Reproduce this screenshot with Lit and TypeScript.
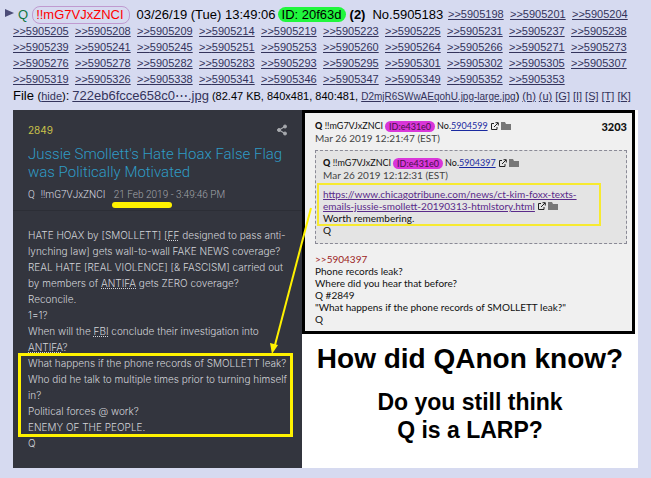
import { LitElement, html, css, svg } from "lit";
import { customElement, property } from "lit/decorators.js";

const BACKLINKS = [
  5905198, 5905201, 5905204,
  5905205, 5905208, 5905209, 5905214, 5905219, 5905223, 5905225, 5905231, 5905237, 5905238,
  5905239, 5905241, 5905245, 5905251, 5905253, 5905260, 5905264, 5905266, 5905271, 5905273,
  5905276, 5905278, 5905282, 5905283, 5905293, 5905295, 5905301, 5905302, 5905305, 5905307,
  5905319, 5905326, 5905338, 5905341, 5905346, 5905347, 5905349, 5905352, 5905353,
];

@customElement("post-header")
class PostHeader extends LitElement {
  static styles = css`
    :host {
      display: block;
      color: #000;
      font: 13px/16px "Liberation Sans", Arial, sans-serif;
    }
    a { color: #34345c; }
    .row { display: flex; }
    .toggle {
      flex: none;
      width: 9px;
      height: 16px;
      margin: 5px -1px 0 0;
      padding: 0;
      border: 0;
      background: none;
      display: flex;
      align-items: center;
    }
    .intro { display: flex; flex-wrap: wrap; min-width: 0; padding-top: 6px; }
    .who {
      flex: 0 0 435px;
      min-width: 0;
      height: 17px;
      display: flex;
      align-items: center;
      white-space: nowrap;
    }
    .name { color: #117743; padding-left: 5px; }
    .trip {
      color: #f00;
      margin-left: 4px;
      padding: 0 5px 0 3px;
      border: 1px solid #c09ad0;
      border-radius: 8px;
    }
    .time { margin-left: 7px; }
    .id {
      margin-left: 2px;
      padding: 0 4px;
      line-height: 15px;
      border-radius: 8px;
      background: #20f63d;
    }
    .count { margin-left: 4px; font-weight: bold; }
    .no { margin-left: 7px; }
    .back { flex: none; width: 62px; font-size: 11px; line-height: 16px; }
    .file {
      display: flex;
      flex-wrap: wrap;
      align-items: baseline;
      padding-left: 8px;
      gap: 0 3px;
      line-height: 18px;
      white-space: nowrap;
    }
    .small { font-size: 11px; }
    .orig { font-size: 10px; }
  `;

  render() {
    return html`
      <div class="row">
        <button class="toggle" aria-label="Collapse post">
          <svg width="9" height="10" viewBox="0 0 9 10"><path d="M0 1L9 5L0 9Z" fill="#4c4c78" /></svg>
        </button>
        <div class="intro">
          <div class="who">
            <span class="name">Q</span><span class="trip">!!mG7VJxZNCI</span>
            <time class="time">03/26/19 (Tue) 13:49:06</time>
            <span class="id">ID: 20f63d</span><span class="count">(2)</span>
            <span class="no">No.5905183</span>
          </div>
          ${BACKLINKS.map((n) => html`<span class="back"><a href="#${n}">&gt;&gt;${n}</a></span>`)}
        </div>
      </div>
      <div class="file">
        <span>File <span class="small">(<a href="#hide">hide</a>)</span>:</span>
        <a href="#file">722eb6fcce658c0⋯.jpg</a>
        <span class="small">(82.47 KB, 840x481, 840:481, <a class="orig" href="#orig">D2mjR6SWwAEqohU.jpg-large.jpg</a>)</span>
        ${["(h)", "(u)", "[G]", "[I]", "[S]", "[T]", "[K]"].map((t) => html`<a class="small" href="#${t}">${t}</a>`)}
      </div>
    `;
  }
}

@customElement("drop-card")
class DropCard extends LitElement {
  static styles = css`
    :host {
      display: block;
      background: #33353e;
      color: #d2d4d9;
      font: 300 10px/16px Inter, sans-serif;
      white-space: nowrap;
    }
    .head { padding: 12px 15px 7px; border-bottom: 1px solid #2c2e36; }
    .top { display: flex; justify-content: space-between; align-items: center; height: 16px; }
    .num { color: #c9c04a; font-weight: 400; }
    .share { padding: 0; border: 0; background: none; height: 12px; display: flex; }
    h2 {
      margin: 7px 0 6px;
      color: #2f9cc6;
      font: 300 15px/18px Roboto, sans-serif;
    }
    .by { color: #a3a5ab; font: 300 10px/16px Roboto, sans-serif; }
    .trip { color: #dcdee2; margin-right: 6px; }
    .date { position: relative; }
    .date::after {
      content: "";
      position: absolute;
      left: -2px;
      right: -4px;
      top: 13px;
      height: 6px;
      border-radius: 3px;
      background: #fff200;
    }
    .body { padding: 16px 15px 17px; }
    .body p { margin: 0; }
    abbr { text-decoration: underline dotted; }
    .key { position: relative; }
    .key::before {
      content: "";
      position: absolute;
      inset: -2px -6px -2px -10px;
      border: 3px solid #fff200;
    }
  `;

  render() {
    return html`
      <div class="head">
        <div class="top">
          <span class="num">2849</span>
          <button class="share" aria-label="Share">
            <svg width="10" height="12" viewBox="0 0 10 12" fill="#a7a9ae" stroke="#a7a9ae">
              <path d="M8 2.5L2 6L8 9.5" fill="none" stroke-width="1.2" />
              <circle cx="8" cy="2.5" r="1.5" /><circle cx="2" cy="6" r="1.5" /><circle cx="8" cy="9.5" r="1.5" />
            </svg>
          </button>
        </div>
        <h2>Jussie Smollett's Hate Hoax False Flag<br />was Politically Motivated</h2>
        <div class="by">
          <span class="trip">Q</span><span class="trip">!!mG7VJxZNCI</span>
          <span class="date">21 Feb 2019</span> - 3:49:46 PM
        </div>
      </div>
      <div class="body">
        <p>HATE HOAX by [SMOLLETT] [<abbr>FF</abbr> designed to pass anti-<br />lynching law] gets wall-to-wall FAKE NEWS coverage?</p>
        <p>REAL HATE [REAL VIOLENCE] [&amp; FASCISM] carried out<br />by members of <abbr>ANTIFA</abbr> gets ZERO coverage?</p>
        <p>Reconcile.</p>
        <p>1=1?</p>
        <p>When will the <abbr>FBI</abbr> conclude their investigation into<br /><abbr>ANTIFA</abbr>?</p>
        <div class="key">
          <p>What happens if the phone records of SMOLLETT leak?</p>
          <p>Who did he talk to multiple times prior to turning himself<br />in?</p>
          <p>Political forces @ work?</p>
          <p>ENEMY OF THE PEOPLE.</p>
        </div>
        <p>Q</p>
      </div>
    `;
  }
}

const openIcon = svg`<svg class="icon" width="9" height="9" viewBox="0 0 9 9" fill="none" stroke="#222">
  <path d="M4 1.5H1.5V7.5H7V5M5.5 .7H8.3V3.5M8 1L4 5" /></svg>`;
const folderIcon = svg`<svg class="icon" width="11" height="9" viewBox="0 0 11 9">
  <path d="M0 0H4L5 2H10V8H0Z" fill="#777" /></svg>`;

@customElement("post-meta")
class PostMeta extends LitElement {
  @property() no = "";
  @property() date = "";

  static styles = css`
    :host { display: block; }
    .line { display: flex; align-items: center; height: 12px; white-space: nowrap; font-size: 9px; }
    .id {
      margin: 0 2px;
      padding: 0 4px;
      line-height: 11px;
      border-radius: 6px;
      background: #d936d9;
      color: #4a104a;
    }
    b { font-weight: 900; }
    a { color: #1a2aa0; }
    .icon { margin-left: 2px; }
    .date { display: block; color: #444; }
  `;

  render() {
    return html`
      <div class="line">
        <b>Q</b>&nbsp;<span>!!mG7VJxZNCI</span><span class="id">ID:e431e0</span>
        <span>No.<a href="#${this.no}">${this.no}</a></span>${openIcon}${folderIcon}
      </div>
      <time class="date">${this.date}</time>
    `;
  }
}

@customElement("reply-card")
class ReplyCard extends LitElement {
  static styles = css`
    :host {
      display: block;
      position: relative;
      margin-right: 3px;
      padding: 7px 5px 6px 10px;
      border: 3px solid #000;
      background: #f0f0f0;
      color: #111;
      font: 10px/12px Lato, sans-serif;
    }
    .num { position: absolute; top: 8px; right: 5px; font-size: 11px; font-weight: 900; }
    .quote {
      margin: 6px 0 9px;
      padding: 6px 7px 7px;
      border: 1px dashed #8a8a96;
      background: #e4e4e4;
    }
    p { margin: 0; }
    .key { position: relative; margin-top: 7px; }
    .key::before {
      content: "";
      position: absolute;
      inset: -5px 18px -2px -6px;
      border: 2px solid #f7ea30;
    }
    .url { color: #5a2a8a; position: relative; }
    .ref { display: block; color: #9c1c1c; text-decoration: none; }
    .icon { margin-left: 2px; vertical-align: -1px; }
  `;

  render() {
    return html`
      <span class="num">3203</span>
      <post-meta no="5904599" date="Mar 26 2019 12:21:47 (EST)"></post-meta>
      <div class="quote">
        <post-meta no="5904397" date="Mar 26 2019 12:12:31 (EST)"></post-meta>
        <div class="key">
          <a class="url" href="#article">https://www.chicagotribune.com/news/ct-kim-foxx-texts-<br />emails-jussie-smollett-20190313-htmlstory.html</a>${openIcon}${folderIcon}
          <p>Worth remembering.</p>
        </div>
        <p>Q</p>
      </div>
      <a class="ref" href="#5904397">&gt;&gt;5904397</a>
      <p>Phone records leak?</p>
      <p>Where did you hear that before?</p>
      <p>Q #2849</p>
      <p>"What happens if the phone records of SMOLLETT leak?"</p>
      <p>Q</p>
    `;
  }
}

@customElement("app-root")
class AppRoot extends LitElement {
  static styles = css`
    :host {
      display: block;
      box-sizing: border-box;
      min-height: 100vh;
      padding: 0 13px 10px 5px;
      background: #d6daf0;
    }
    post-header { margin-right: -13px; }
    .picture {
      position: relative;
      display: grid;
      grid-template-columns: 289fr 336fr;
      margin: 4px 0 0 8px;
      background: #fff;
    }
    .captions {
      color: #000;
      text-align: center;
      font-family: "Liberation Sans", Arial, sans-serif;
      font-weight: bold;
    }
    h1 { margin: 9px 0 13px; font-size: 28px; line-height: 32px; }
    .ask { margin: 0; font-size: 23px; line-height: 28px; }
    .arrow { position: absolute; left: 0; top: 0; width: 100%; height: 100%; pointer-events: none; }
  `;

  render() {
    return html`
      <post-header></post-header>
      <main class="picture">
        <drop-card></drop-card>
        <section>
          <reply-card></reply-card>
          <div class="captions">
            <h1>How did QAnon know?</h1>
            <p class="ask">Do you still think<br />Q is a LARP?</p>
          </div>
        </section>
        <svg class="arrow" viewBox="0 0 625 358" preserveAspectRatio="none">
          <path d="M298 98L262 235" stroke="#fff200" stroke-width="2" />
          <path d="M257 233L265 235L259 244Z" fill="#fff200" />
        </svg>
      </main>
    `;
  }
}
